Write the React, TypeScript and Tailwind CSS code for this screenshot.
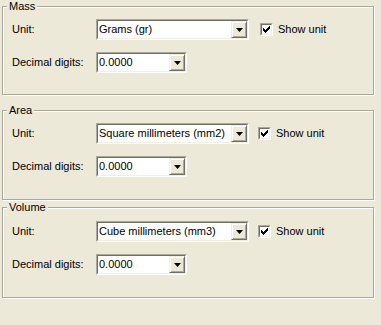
import React from 'react'

const font = "font-['Liberation_Sans',Arial,sans-serif]"

function DropButton() {
  return (
    <div className="flex h-[17px] w-[16px] shrink-0 items-center justify-center border border-t-[#f1efe2] border-l-[#f1efe2] border-r-[#716f64] border-b-[#716f64] bg-[#ece9d8] shadow-[inset_1px_1px_0_#fff,inset_-1px_-1px_0_#aca899]">
      <svg width="7" height="4" viewBox="0 0 7 4" className="block">
        <polygon points="0,0 7,0 3.5,4" fill="#000" />
      </svg>
    </div>
  )
}

function Combo({ value, className }: { value: string; className: string }) {
  return (
    <div className={`h-[21px] shrink-0 border border-[#aca899] border-r-white border-b-white ${className}`}>
      <div className="flex h-full w-full items-center border border-[#716f64] border-r-[#f1efe2] border-b-[#f1efe2] bg-white">
        <span className="flex-1 truncate pl-[1px] leading-[13px] text-black">{value}</span>
        <DropButton />
      </div>
    </div>
  )
}

function CheckBox({ label, className }: { label: string; className: string }) {
  return (
    <div className={`flex items-center ${className}`}>
      <div className="h-[13px] w-[13px] border border-[#aca899] border-r-white border-b-white">
        <div className="flex h-full w-full items-center justify-center border border-[#716f64] border-r-[#f1efe2] border-b-[#f1efe2] bg-white">
          <svg width="7" height="7" viewBox="0 0 7 7" className="block" shapeRendering="crispEdges">
            <polygon points="0,2 2,4 6,0 7,0 7,3 2,7 0,5" fill="#000" />
          </svg>
        </div>
      </div>
      <span className="ml-[5px] leading-[13px] text-black">{label}</span>
    </div>
  )
}

function Group({
  title,
  unit,
  className,
  checkClass,
}: {
  title: string
  unit: string
  className: string
  checkClass: string
}) {
  return (
    <div
      className={`relative ml-[2px] w-[372px] border border-[#aca899] pt-[12px] pl-[9px] shadow-[inset_1px_1px_0_#fff,1px_1px_0_#fff] ${className}`}
    >
      <span className="absolute top-[-7px] left-[4px] bg-[#ece9d8] px-[2px] leading-[13px] text-black">
        {title}
      </span>
      <div className="flex items-center">
        <span className="w-[84px] text-black">Unit:</span>
        <Combo value={unit} className="w-[153px]" />
        <CheckBox label="Show unit" className={checkClass} />
      </div>
      <div className="mt-[12px] flex items-center">
        <span className="w-[84px] text-black">Decimal digits:</span>
        <Combo value="0.0000" className="w-[91px]" />
      </div>
    </div>
  )
}

export default function App() {
  return (
    <div className={`h-[325px] w-[381px] overflow-hidden bg-[#ece9d8] pt-[6px] text-[11px] ${font}`}>
      <Group title="Mass" unit="Grams (gr)" className="h-[89px]" checkClass="ml-[11px]" />
      <Group
        title="Area"
        unit="Square millimeters (mm2)"
        className="mt-[15px] h-[90px]"
        checkClass="ml-[9px]"
      />
      <Group
        title="Volume"
        unit="Cube millimeters (mm3)"
        className="mt-[7px] h-[91px] pt-[13px]"
        checkClass="ml-[9px]"
      />
    </div>
  )
}
